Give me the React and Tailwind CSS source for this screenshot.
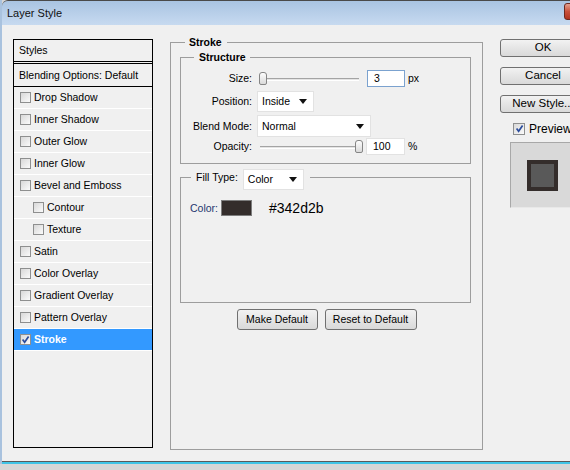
import React from 'react'

const STYLES = [
  { label: 'Drop Shadow' },
  { label: 'Inner Shadow' },
  { label: 'Outer Glow' },
  { label: 'Inner Glow' },
  { label: 'Bevel and Emboss' },
  { label: 'Contour', indent: true },
  { label: 'Texture', indent: true },
  { label: 'Satin' },
  { label: 'Color Overlay' },
  { label: 'Gradient Overlay' },
  { label: 'Pattern Overlay' },
  { label: 'Stroke', active: true },
]

function Check({ checked, size = 'h-[11px] w-[11px]' }) {
  return (
    <span className={`flex shrink-0 items-center justify-center border border-[#8e8f8f] bg-linear-to-br from-[#d8d8d8] to-[#fbfbfb] ${size}`}>
      {checked && (
        <svg viewBox="0 0 9 9" className="h-[9px] w-[9px]">
          <path d="M1.6 4.6 L3.6 7.2 L7.6 1.6" stroke="#2b4c9c" strokeWidth="1.7" fill="none" />
        </svg>
      )}
    </span>
  )
}

function Select({ value, className }) {
  return (
    <div className={`flex items-center justify-between border border-[#e2e2e2] bg-white pl-[4px] pr-[6px] ${className}`}>
      <span>{value}</span>
      <svg viewBox="0 0 8 5" className="h-[5px] w-[8px]"><path d="M0 0 H8 L4 5 Z" fill="#111" /></svg>
    </div>
  )
}

function Slider({ at }) {
  return (
    <div className="relative h-[14px] w-[104px]">
      <div className="absolute top-[6px] left-[1px] h-[3px] w-[99px] border-t border-[#a4a4a4] border-b border-b-white bg-[#e4e4e4]" />
      <div className={`absolute top-0 h-[13px] w-[8px] rounded-t-[3px] rounded-b-[2px] border border-[#858585] bg-linear-to-b from-[#fdfdfd] to-[#dadada] ${at === 'end' ? 'left-[96px]' : 'left-0'}`} />
    </div>
  )
}

function Btn({ children, className }) {
  return (
    <div className={`flex items-center justify-center rounded-[3px] border border-[#707070] bg-linear-to-b from-[#f2f2f2] to-[#d9d9d9] ${className}`}>{children}</div>
  )
}

export default function App() {
  return (
    <div className="relative h-[470px] w-[570px] overflow-hidden bg-[#d6d6d6] font-['Liberation_Sans',Arial,sans-serif] text-[10.5px] leading-none text-black">
      <div className="flex w-[610px] flex-col border-l-2 border-[#a9c2de]">
        <div className="flex h-[25px] items-center rounded-tl-[6px] border-t border-[#4a4a4a] bg-linear-to-b from-[#a9c4e2] to-[#c7daf0] pl-[5px]">
          <span className="text-[11px] text-[#111]">Layer Style</span>
          <div className="mt-[-3px] mr-[3px] ml-auto h-[17px] w-[43px] rounded-[3px] border border-[#6e2a20] bg-linear-to-b from-[#e3a08f] via-[#c9503a] to-[#b0341f]" />
        </div>

        <div className="flex h-[437px] items-start border-b border-[#5a5a5a] bg-[#f0f0f0] pl-[11px]">
          {/* styles list */}
          <div className="mt-[14px] flex h-[409px] w-[140px] shrink-0 flex-col border border-black">
            <div className="flex h-[22px] items-center border-b border-black pl-[5px]">Styles</div>
            <div className="h-[1px]" />
            <div className="flex h-[24px] items-center border-y border-black pl-[5px]">Blending Options: Default</div>
            {STYLES.map(item => (
              <div key={item.label} className={`flex h-[22px] items-center border-b border-white ${item.indent ? 'pl-[19px]' : 'pl-[6px]'} ${item.active ? 'bg-[#3399ff] font-bold text-white' : ''}`}>
                <Check checked={item.active} />
                <span className="ml-[3px]">{item.label}</span>
              </div>
            ))}
          </div>

          {/* stroke panel */}
          <fieldset className="mt-[11px] ml-[17px] h-[414px] w-[313px] shrink-0 border border-[#9d9d9d]">
            <legend className="ml-[14px] pr-[5px] pl-[4px] leading-[12px] font-bold">Stroke</legend>

            <fieldset className="mt-[3px] ml-[9px] w-[291px] border border-[#9d9d9d] pb-[8px]">
              <legend className="ml-[13px] pr-[4px] pl-[5px] leading-[12px] font-bold">Structure</legend>
              <div className="mt-[7px] flex h-[17px] items-center">
                <span className="w-[71px] text-right">Size:</span>
                <div className="ml-[7px]"><Slider at="start" /></div>
                <div className="ml-[4px] flex h-[17px] w-[38px] items-center border border-[#7ba2cf] bg-white pl-[6px]">3</div>
                <span className="ml-[3px]">px</span>
              </div>
              <div className="mt-[4px] flex h-[21px] items-center">
                <span className="w-[71px] text-right">Position:</span>
                <Select value="Inside" className="ml-[5px] h-[21px] w-[57px]" />
              </div>
              <div className="mt-[3px] flex h-[22px] items-center">
                <span className="w-[71px] text-right">Blend Mode:</span>
                <Select value="Normal" className="ml-[5px] h-[22px] w-[114px]" />
              </div>
              <div className="mt-[1px] flex h-[17px] items-center">
                <span className="w-[71px] text-right">Opacity:</span>
                <div className="ml-[7px]"><Slider at="end" /></div>
                <div className="ml-[3px] flex h-[17px] w-[39px] items-center border border-[#e2e2e2] bg-white pl-[6px]">100</div>
                <span className="ml-[3px]">%</span>
              </div>
            </fieldset>

            <fieldset className="mt-[5px] ml-[9px] h-[134px] w-[291px] border border-[#9d9d9d]">
              <legend className="ml-[10px] flex h-[17px] items-start pr-[6px] pl-[5px]">
                <span className="leading-[17px]">Fill Type:</span>
                <Select value="Color" className="ml-[5px] h-[21px] w-[61px] shrink-0" />
              </legend>
              <div className="mt-[14px] flex h-[16px] items-center pl-[9px]">
                <span className="text-[#23366f]">Color:</span>
                <span className="ml-[3px] h-[16px] w-[31px] border border-[#7d7d7d] bg-[#342d2b]" />
                <span className="ml-[17px] text-[14px]">#342d2b</span>
              </div>
            </fieldset>

            <div className="mt-[6px] flex justify-center gap-[7px]">
              <Btn className="h-[21px] w-[81px]">Make Default</Btn>
              <Btn className="h-[21px] w-[92px]">Reset to Default</Btn>
            </div>
          </fieldset>

          {/* right buttons */}
          <div className="mt-[14px] ml-[17px] flex flex-col text-[11.5px]">
            <Btn className="h-[18px] w-[86px] border-[#3c7fb1] from-[#eaf6fd] to-[#bee6fd]">OK</Btn>
            <Btn className="mt-[10px] h-[18px] w-[86px]">Cancel</Btn>
            <Btn className="mt-[10px] h-[18px] w-[86px]">New Style...</Btn>
            <div className="mt-[9px] ml-[13px] flex h-[13px] items-center">
              <Check checked size="h-[12px] w-[12px]" />
              <span className="ml-[4px] text-[12px]">Preview</span>
            </div>
            <div className="mt-[7px] ml-[10px] flex h-[66px] w-[64px] items-center justify-center border border-[#a8a8a8] border-r-[#e8e8e8] border-b-[#e8e8e8] bg-[#d9d9d9]">
              <div className="h-[31px] w-[31px] border-4 border-[#342d2b] bg-[#595959]" />
            </div>
          </div>
        </div>
        <div className="h-[2px] bg-[#3fc4e6]" />
      </div>
    </div>
  )
}
